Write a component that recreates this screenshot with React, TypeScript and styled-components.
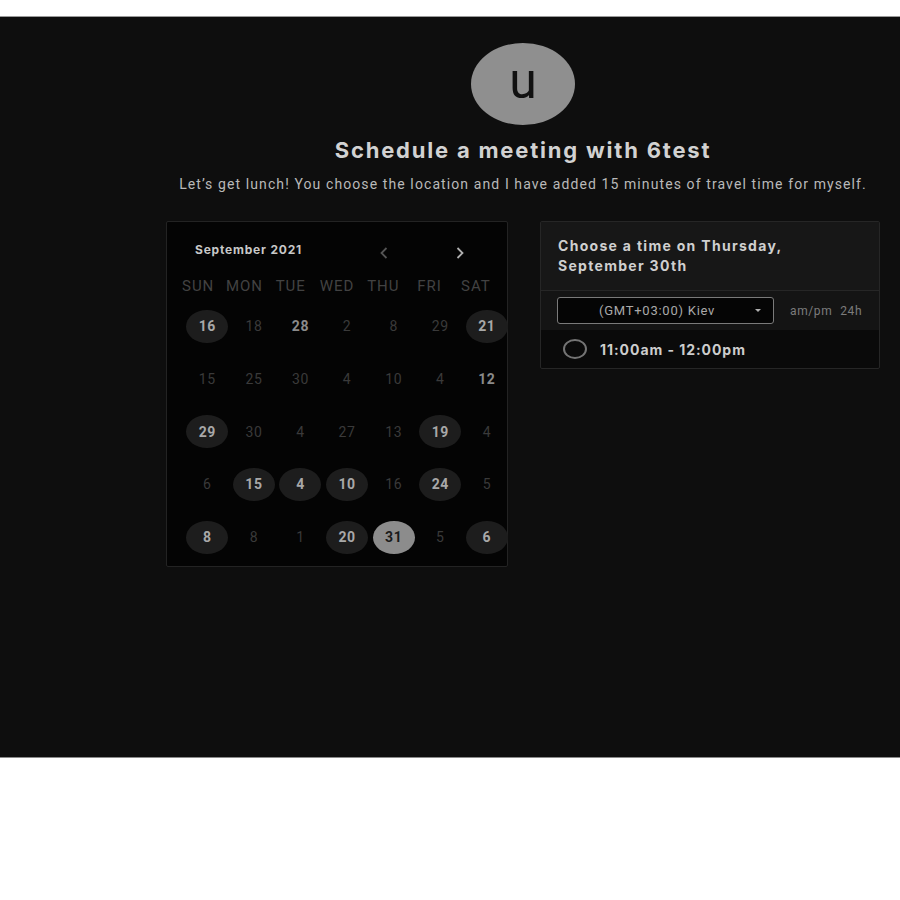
import React from "react";
import styled, { createGlobalStyle } from "styled-components";

const GlobalStyle = createGlobalStyle`
    body {
        margin: 0;
        background: #ffffff;
        font-family: Roboto, "Liberation Sans", sans-serif;
    }
`;

const Page = styled.div`
    padding-top: 16px;
`;

const Stage = styled.section`
    box-sizing: border-box;
    height: 742px;
    padding-top: 26px;
    background: #0e0e0e;
    border-top: 1px solid #9a9a9a;
    border-bottom: 1px solid #8a8a8a;
`;

const Inner = styled.div`
    width: 714px;
    margin-left: 166px;
    display: flex;
    flex-direction: column;
    align-items: center;
`;

const Avatar = styled.div`
    width: 104px;
    height: 82px;
    border-radius: 50%;
    background: #8f8f8f;
    color: #111111;
    display: flex;
    align-items: center;
    justify-content: center;
    font-family: Roboto, sans-serif;
    font-size: 50px;
    font-weight: 400;
    line-height: 1;
    padding-bottom: 7px;
    box-sizing: border-box;
`;

const Title = styled.h1`
    margin: 11px 0 0;
    font-family: Inter, "Liberation Sans", sans-serif;
    font-size: 22px;
    line-height: 28px;
    font-weight: 700;
    letter-spacing: 1.8px;
    color: #d2d2d2;
`;

const Subtitle = styled.p`
    margin: 10px 0 0;
    font-size: 14px;
    line-height: 20px;
    letter-spacing: 1.1px;
    color: #b9b9b9;
    white-space: nowrap;
`;

const Columns = styled.div`
    margin-top: 27px;
    width: 100%;
    display: flex;
    align-items: flex-start;
    gap: 32px;
`;

const Calendar = styled.div`
    box-sizing: border-box;
    width: 342px;
    height: 346px;
    background: #040404;
    border: 1px solid #232323;
    border-radius: 2px;
    padding-top: 18px;
`;

const CalHead = styled.div`
    display: flex;
    align-items: center;
    padding-left: 28px;
    height: 18px;
`;

const Month = styled.div`
    flex: 0 0 179px;
    font-family: Inter, "Liberation Sans", sans-serif;
    font-size: 12px;
    font-weight: 700;
    letter-spacing: 0.8px;
    color: #c8c8c8;
`;

const NavBtn = styled.button<{ $bright?: boolean }>`
    width: 20px;
    height: 18px;
    margin-top: 8px;
    padding: 0;
    border: none;
    background: transparent;
    display: flex;
    align-items: center;
    justify-content: center;
    color: ${(p) => (p.$bright ? "#b0b0b0" : "#555555")};
    & + & {
        margin-left: 56px;
    }
`;

const WeekRow = styled.div`
    margin-top: 18px;
    padding-left: 8px;
    display: grid;
    grid-template-columns: repeat(7, 46.3px);
    font-size: 15px;
    line-height: 20px;
    letter-spacing: 1px;
    color: #424242;
    text-align: center;
`;

const DateGrid = styled.div`
    margin-top: 4px;
    padding-left: 17px;
    display: grid;
    grid-template-columns: repeat(7, 46.6px);
    grid-auto-rows: 52.7px;
`;

type Kind = "dim" | "bold" | "open" | "selected";

const Day = styled.div<{ $kind: Kind }>`
    justify-self: center;
    align-self: center;
    width: 42px;
    height: 33px;
    border-radius: 50%;
    display: flex;
    align-items: center;
    justify-content: center;
    font-size: 14px;
    letter-spacing: 0.6px;
    font-weight: ${(p) => (p.$kind === "dim" ? 400 : 700)};
    color: ${(p) =>
        p.$kind === "dim" ? "#3a3a3a" : p.$kind === "bold" ? "#8a8a8a" : p.$kind === "selected" ? "#1a1a1a" : "#a8a8a8"};
    background: ${(p) => (p.$kind === "open" ? "#1d1d1d" : p.$kind === "selected" ? "#8c8c8c" : "transparent")};
`;

const Panel = styled.div`
    box-sizing: border-box;
    width: 342px;
    background: #0a0a0a;
    border: 1px solid #262626;
    border-radius: 2px;
`;

const PanelHead = styled.div`
    padding: 14px 17px;
    background: #171717;
    border-bottom: 1px solid #262626;
    font-family: Inter, "Liberation Sans", sans-serif;
    font-size: 14px;
    line-height: 20px;
    font-weight: 700;
    letter-spacing: 1.3px;
    color: #cfcfcf;
`;

const ZoneRow = styled.div`
    height: 39px;
    padding: 0 16px;
    background: #141414;
    display: flex;
    align-items: center;
`;

const ZoneSelect = styled.div`
    box-sizing: border-box;
    width: 217px;
    height: 27px;
    border: 1px solid #7a7a7a;
    border-radius: 3px;
    background: #050505;
    display: flex;
    align-items: center;
    padding: 0 12px 0 41px;
    font-size: 13px;
    letter-spacing: 0.75px;
    color: #a9a9a9;
`;

const ZoneText = styled.span`
    flex: 1;
`;

const Caret = styled.span`
    width: 0;
    height: 0;
    border-left: 3.5px solid transparent;
    border-right: 3.5px solid transparent;
    border-top: 3.5px solid #b0b0b0;
`;

const Format = styled.div`
    margin-left: 16px;
    display: flex;
    gap: 8px;
    font-size: 12px;
    letter-spacing: 0.6px;
    color: #7c7c7c;
`;

const Slot = styled.div`
    height: 38px;
    padding-left: 22px;
    display: flex;
    align-items: center;
    gap: 13px;
    font-family: Inter, "Liberation Sans", sans-serif;
    font-size: 14px;
    font-weight: 700;
    letter-spacing: 0.95px;
    color: #cdcdcd;
`;

const Radio = styled.span`
    box-sizing: border-box;
    width: 24px;
    height: 20px;
    border-radius: 50%;
    border: 2px solid #747474;
`;

const weekdays = ["SUN", "MON", "TUE", "WED", "THU", "FRI", "SAT"];

const days: [string, Kind][] = [
    ["16", "open"], ["18", "dim"], ["28", "bold"], ["2", "dim"], ["8", "dim"], ["29", "dim"], ["21", "open"],
    ["15", "dim"], ["25", "dim"], ["30", "dim"], ["4", "dim"], ["10", "dim"], ["4", "dim"], ["12", "bold"],
    ["29", "open"], ["30", "dim"], ["4", "dim"], ["27", "dim"], ["13", "dim"], ["19", "open"], ["4", "dim"],
    ["6", "dim"], ["15", "open"], ["4", "open"], ["10", "open"], ["16", "dim"], ["24", "open"], ["5", "dim"],
    ["8", "open"], ["8", "dim"], ["1", "dim"], ["20", "open"], ["31", "selected"], ["5", "dim"], ["6", "open"],
];

function Chevron({ dir }: { dir: "left" | "right" }) {
    return (
        <svg width="8" height="12" viewBox="0 0 8 12" fill="none">
            <path
                d={dir === "left" ? "M6.5 1 L1.5 6 L6.5 11" : "M1.5 1 L6.5 6 L1.5 11"}
                stroke="currentColor"
                strokeWidth="1.8"
            />
        </svg>
    );
}

function App() {
    return (
        <Page>
            <GlobalStyle />
            <Stage>
                <Inner>
                    <Avatar>u</Avatar>
                    <Title>Schedule a meeting with 6test</Title>
                    <Subtitle>
                        Let’s get lunch! You choose the location and I have added 15 minutes of travel time for myself.
                    </Subtitle>
                    <Columns>
                        <Calendar>
                            <CalHead>
                                <Month>September 2021</Month>
                                <NavBtn><Chevron dir="left" /></NavBtn>
                                <NavBtn $bright><Chevron dir="right" /></NavBtn>
                            </CalHead>
                            <WeekRow>
                                {weekdays.map((d) => (
                                    <span key={d}>{d}</span>
                                ))}
                            </WeekRow>
                            <DateGrid>
                                {days.map(([n, kind], i) => (
                                    <Day key={i} $kind={kind}>{n}</Day>
                                ))}
                            </DateGrid>
                        </Calendar>
                        <Panel>
                            <PanelHead>
                                Choose a time on Thursday,
                                <br />
                                September 30th
                            </PanelHead>
                            <ZoneRow>
                                <ZoneSelect>
                                    <ZoneText>(GMT+03:00) Kiev</ZoneText>
                                    <Caret />
                                </ZoneSelect>
                                <Format>
                                    <span>am/pm</span>
                                    <span>24h</span>
                                </Format>
                            </ZoneRow>
                            <Slot>
                                <Radio />
                                11:00am - 12:00pm
                            </Slot>
                        </Panel>
                    </Columns>
                </Inner>
            </Stage>
        </Page>
    );
}

export default App;
